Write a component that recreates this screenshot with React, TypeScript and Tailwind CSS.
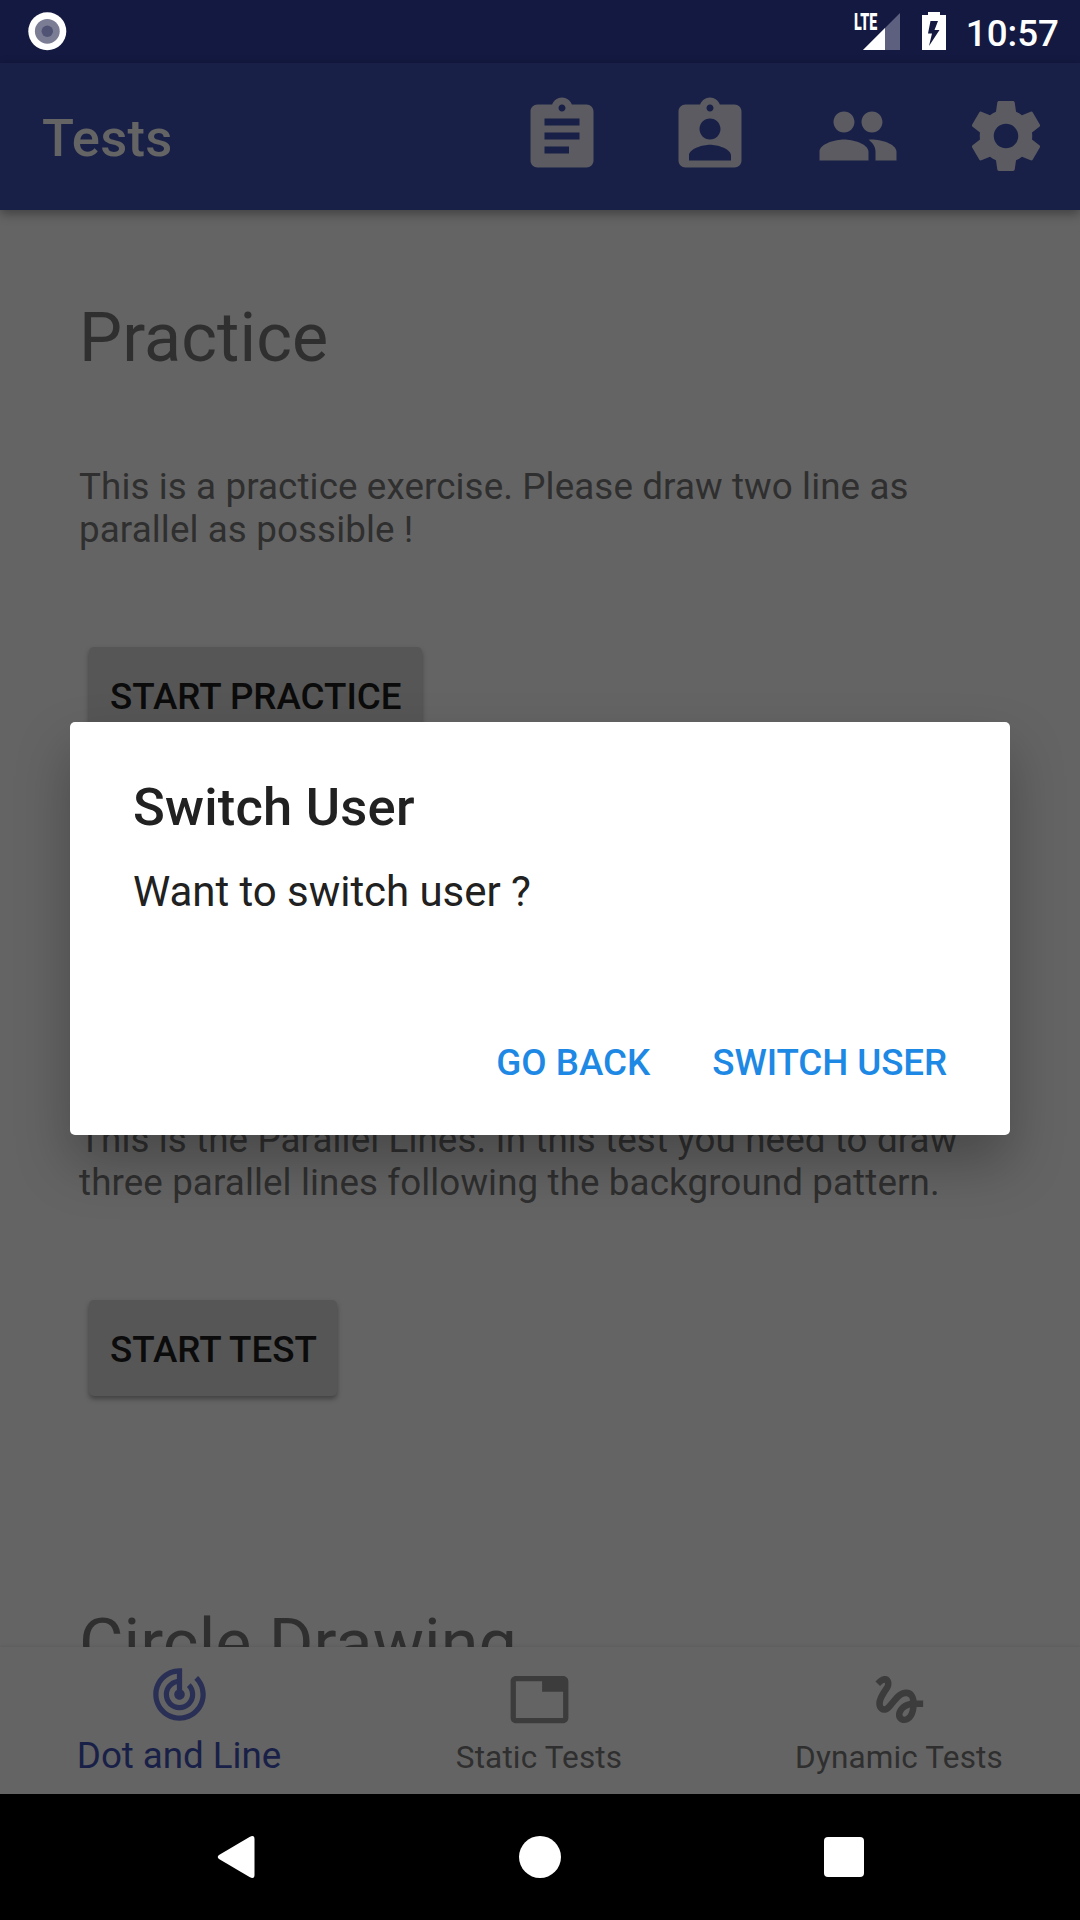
import { MdGesture, MdTab, MdTrackChanges } from "react-icons/md";

const CLIPBOARD =
  "M19 3h-4.18C14.4 1.84 13.3 1 12 1c-1.3 0-2.4.84-2.82 2H5c-1.1 0-2 .9-2 2v14c0 1.1.9 2 2 2h14c1.1 0 2-.9 2-2V5c0-1.1-.9-2-2-2zm-7 0c.55 0 1 .45 1 1s-.45 1-1 1-1-.45-1-1 .45-1 1-1z";

const TOOLBAR_ICONS = {
  assignment: CLIPBOARD + "m2 14H7v-2h7v2zm3-4H7v-2h10v2zm0-4H7V7h10v2z",
  assignmentInd:
    CLIPBOARD + "m0 4c1.66 0 3 1.34 3 3s-1.34 3-3 3-3-1.34-3-3 1.34-3 3-3zm6 12H6v-1.4c0-2 4-3.1 6-3.1s6 1.1 6 3.1V19z",
  people:
    "M16 11c1.66 0 2.99-1.34 2.99-3S17.66 5 16 5c-1.66 0-3 1.34-3 3s1.34 3 3 3zm-8 0c1.66 0 2.99-1.34 2.99-3S9.66 5 8 5C6.34 5 5 6.34 5 8s1.34 3 3 3zm0 2c-2.33 0-7 1.17-7 3.5V19h14v-2.5c0-2.33-4.67-3.5-7-3.5zm8 0c-.29 0-.62.02-.97.05 1.16.84 1.97 1.97 1.97 3.45V19h6v-2.5c0-2.33-4.67-3.5-7-3.5z",
  settings:
    "M19.43 12.98c.04-.32.07-.64.07-.98s-.03-.66-.07-.98l2.11-1.65c.19-.15.24-.42.12-.64l-2-3.46c-.12-.22-.39-.3-.61-.22l-2.49 1c-.52-.4-1.08-.73-1.69-.98l-.38-2.65C14.46 2.18 14.25 2 14 2h-4c-.25 0-.46.18-.49.42l-.38 2.65c-.61.25-1.17.59-1.69.98l-2.49-1c-.23-.09-.49 0-.61.22l-2 3.46c-.13.22-.07.49.12.64l2.11 1.65c-.04.32-.07.65-.07.98s.03.66.07.98l-2.11 1.65c-.19.15-.24.42-.12.64l2 3.46c.12.22.39.3.61.22l2.49-1c.52.4 1.08.73 1.69.98l.38 2.65c.03.24.24.42.49.42h4c.25 0 .46-.18.49-.42l.38-2.65c.61-.25 1.17-.59 1.69-.98l2.49 1c.23.09.49 0 .61-.22l2-3.46c.12-.22.07-.49-.12-.64l-2.11-1.65zM12 15.5c-1.93 0-3.5-1.57-3.5-3.5s1.57-3.5 3.5-3.5 3.5 1.57 3.5 3.5-1.57 3.5-3.5 3.5z",
};

function StatusBar() {
  return (
    <div className="flex h-[63px] shrink-0 items-start bg-[#131940] text-white">
      <svg className="mt-3 ml-7 size-[39px]" viewBox="0 0 39 39">
        <circle cx="19.3" cy="19.3" r="19" fill="#fff" />
        <circle cx="19.3" cy="19.3" r="12.4" fill="#7b7d95" />
        <circle cx="19.3" cy="19.3" r="5.7" fill="#505373" />
      </svg>
      <div className="ml-auto flex h-[63px] items-start">
        <span className="mt-[9px] w-[9px] origin-left scale-x-[0.62] text-[23px] leading-[27px] font-black whitespace-nowrap">LTE</span>
        <svg className="mt-[13px] h-[37px] w-[37px]" viewBox="0 0 37 37">
          <path d="M37 0V37H0z" fill="#5e6080" />
          <path d="M22 15V37H0z" fill="#fff" />
        </svg>
        <svg className="mt-3 ml-[22px] h-[38px] w-6" viewBox="0 0 24 38">
          <path d="M6 0H18V3H24V38H0V3H6z" fill="#fff" />
          <path d="M8.500 9H16L12.500 18H17.500L7 34L10 21.500H6z" fill="#131940" />
        </svg>
        <span className="mt-3 mr-[21px] ml-5 text-[36.75px] leading-[43px] font-medium">10:57</span>
      </div>
    </div>
  );
}

function Toolbar() {
  return (
    <header className="relative z-10 flex h-[147px] shrink-0 items-center bg-[#192048] pr-8 pl-[42px] shadow-[0_4px_10px_rgba(0,0,0,0.35)]">
      <h1 className="pt-[3px] text-[52.5px] leading-[62px] font-medium tracking-[0.25px] text-[#646464]">Tests</h1>
      <div className="mb-0.5 ml-auto flex gap-16 text-[#5b5b61]">
        {Object.entries(TOOLBAR_ICONS).map(([name, d]) => (
          <svg key={name} viewBox="0 0 24 24" className="size-[84px]" fill="currentColor">
            <path d={d} />
          </svg>
        ))}
      </div>
    </header>
  );
}

function Section({ title, lines, action }: { title: string; lines: string[]; action: string }) {
  return (
    <section className="flex h-[653px] shrink-0 flex-col items-start">
      <h2 className="pl-[79px] text-[68.25px] leading-20 tracking-[0.1px] text-[#2f2f2f]">{title}</h2>
      <p className="mt-[87px] pl-[79px] text-[36.75px] leading-[43px] tracking-[0.11px] whitespace-nowrap text-[#2f2f2f]">
        {lines.map((line) => (
          <span key={line} className="block">{line}</span>
        ))}
      </p>
      <button className="mt-24 ml-[89px] h-24 rounded-[5px] bg-[#565656] pt-[3px] pr-5 pl-[21px] text-[36.75px] font-medium whitespace-nowrap text-[#0b0b0b] shadow-[0_3px_5px_rgba(0,0,0,0.35)]">
        {action}
      </button>
    </section>
  );
}

function Dialog() {
  return (
    <div role="dialog" className="absolute top-[722px] left-[70px] z-20 flex h-[413px] w-[940px] flex-col rounded-[5px] bg-white px-[63px] text-[#212121] shadow-[0_28px_54px_rgba(0,0,0,0.27)]">
      <h3 className="mt-[54px] text-[52.5px] leading-[62px] font-medium tracking-[0.22px]">Switch User</h3>
      <p className="mt-[29px] text-[42px] leading-[49px] tracking-[-0.05px]">Want to switch user ?</p>
      <div className="mt-[125px] flex justify-end gap-[62px] text-[36.75px] leading-[43px] font-medium text-[#1e88e5]">
        <button>GO BACK</button>
        <button className="tracking-[-0.1px]">SWITCH USER</button>
      </div>
    </div>
  );
}

export default function App() {
  return (
    <div className="relative flex h-[1920px] w-[1080px] flex-col overflow-hidden bg-[#646464] font-[Roboto,sans-serif]">
      <StatusBar />
      <Toolbar />
      <main className="flex min-h-0 flex-1 flex-col overflow-hidden pt-[88px]">
        <Section
          title="Practice"
          lines={["This is a practice exercise. Please draw two line as", "parallel as possible !"]}
          action="START PRACTICE"
        />
        <Section
          title="Parallel Lines"
          lines={["This is the Parallel Lines. In this test you need to draw", "three parallel lines following the background pattern."]}
          action="START TEST"
        />
        <h2 className="pl-[79px] text-[68.25px] leading-20 tracking-[0.1px] text-[#2f2f2f]">Circle Drawing</h2>
      </main>
      <nav className="grid h-[147px] shrink-0 grid-cols-3 bg-[#646464] text-[31.5px] leading-[37px] tracking-[0.15px] text-[#2f2f2f] shadow-[0_-1px_3px_rgba(0,0,0,0.08)]">
        <div className="flex flex-col items-center pt-4 pr-[2px] text-[36.75px] leading-[43px] tracking-[-0.05px] text-[#192048]">
          <MdTrackChanges className="text-[63px] text-[#2a3055]" />
          <span className="mt-2">Dot and Line</span>
        </div>
        <div className="flex flex-col items-center pt-[21px] pr-[2px]">
          <MdTab className="text-[63px] text-[#3c3c3c]" />
          <span className="mt-2">Static Tests</span>
        </div>
        <div className="flex flex-col items-center pt-[21px] pr-[2px]">
          <MdGesture className="text-[63px] text-[#3c3c3c]" />
          <span className="mt-2">Dynamic Tests</span>
        </div>
      </nav>
      <footer className="flex h-[126px] shrink-0 items-center justify-between bg-black pr-[216px] pl-[217px]">
        <svg className="h-[42px] w-[38px]" viewBox="0 0 38 42">
          <path d="M2 19L32.5 1Q37.5 -1.5 37.5 3V39Q37.5 43.5 32.5 41L2 23Q-.5 21 2 19Z" fill="#fff" />
        </svg>
        <span className="size-[42px] rounded-full bg-white" />
        <span className="size-10 rounded-[4px] bg-white" />
      </footer>
      <Dialog />
    </div>
  );
}
